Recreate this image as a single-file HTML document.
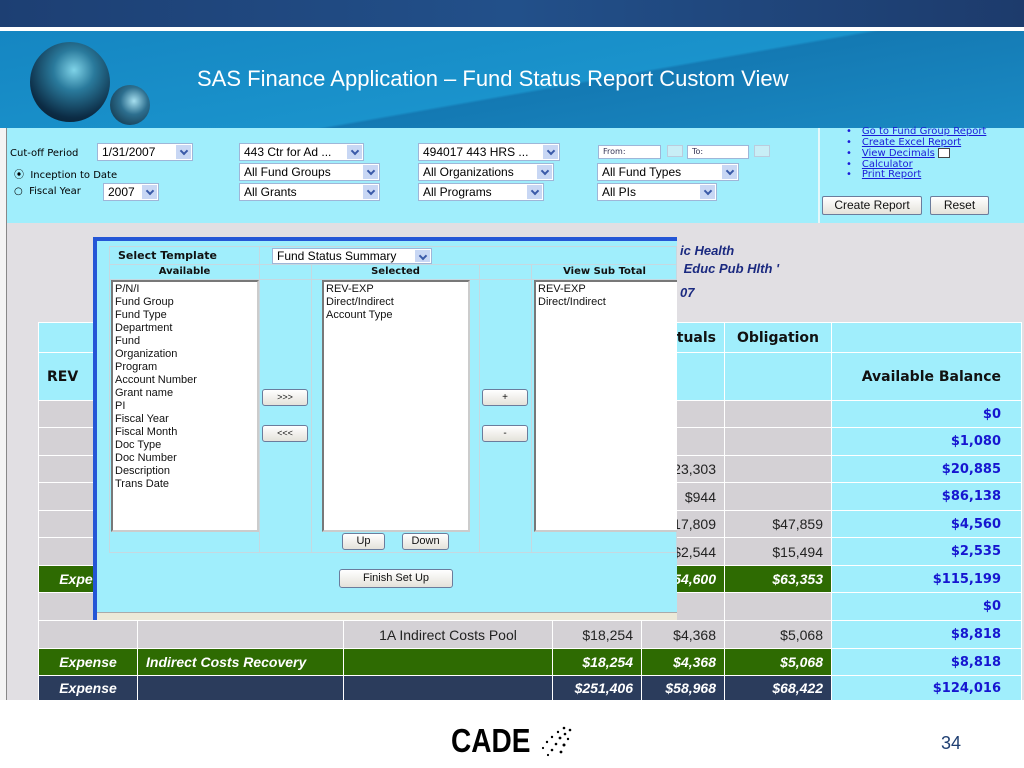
<!DOCTYPE html>
<html><head><meta charset="utf-8"><style>
*{margin:0;padding:0;box-sizing:border-box}
body{width:1024px;height:768px;position:relative;overflow:hidden;background:#fff;font-family:"Liberation Sans",sans-serif}
.a{position:absolute}
.sel{position:absolute;background:#fff;border:1px solid #9fb6d8;font-size:12px;padding:1px 4px;height:18px;line-height:15px;color:#000;white-space:nowrap;overflow:hidden}
.dd{position:absolute;right:1px;top:1px;width:15px;height:14px;background:#c8d7f4;font-size:0}
.dd:before{content:"";position:absolute;left:5px;top:3px;width:4px;height:4px;border-right:2px solid #3a5aa8;border-bottom:2px solid #3a5aa8;transform:rotate(45deg)}
.v{font-family:"DejaVu Sans",sans-serif;font-size:10px}
table.r{position:absolute;left:38px;top:322px;border-collapse:collapse;table-layout:fixed;width:983px;font-size:14px}
table.r td{border:1px solid #fff;background:#d4d1d5;padding:0 8px;text-align:right;color:#222;overflow:hidden;white-space:nowrap}
table.r td.c{background:#a0eefc;color:#1616d0;font-weight:bold;font-family:"DejaVu Sans",sans-serif;font-size:13px;padding-right:20px}
table.r tr.h td{background:#a0eefc;color:#111;font-weight:bold;font-family:"DejaVu Sans",sans-serif;font-size:14px}
table.r tr.g td{background:#2e6b02;color:#fff;font-style:italic;font-weight:bold}
table.r tr.n td{background:#2b3c5c;color:#fff;font-style:italic;font-weight:bold}
table.r tr.g td.c,table.r tr.n td.c{background:#a0eefc;color:#1616d0;font-style:normal}
td.m{text-align:center!important}
.lb{position:absolute;background:#fff;border:2px inset #ccc;font-size:11px;line-height:13px;padding:1px 2px;color:#111}
.bt{position:absolute;background:linear-gradient(#fff,#e4e2da);border:1px solid #6b7c9c;border-radius:3px;font-size:11px;text-align:center;color:#111}
.lk{color:#1a1ad8;font-family:"DejaVu Sans",sans-serif;font-size:10px;line-height:10.5px;white-space:nowrap}
.lk u{margin-left:10px}
</style></head><body>
<div class="a" style="left:0;top:0;width:1024px;height:27px;background:linear-gradient(90deg,#1d3f73,#22508a 50%,#1d3b6c)"></div>
<div class="a" style="left:0;top:31px;width:1024px;height:97px;background:linear-gradient(170deg,#1586c2 0%,#1a93cc 55%,#1479b3 56%,#1a8ac3 100%)"></div>
<div class="a" style="left:30px;top:42px;width:80px;height:80px;border-radius:50%;background:radial-gradient(circle at 55% 35%,#7fd3e8 0%,#2a7a9c 30%,#0c2c45 70%,#05151f 100%)"></div>
<div class="a" style="left:110px;top:85px;width:40px;height:40px;border-radius:50%;background:radial-gradient(circle at 60% 40%,#a6dfef 0%,#2d6f8f 40%,#0b2638 100%)"></div>
<div class="a" style="left:197px;top:66px;color:#fff;font-size:22px">SAS Finance Application – Fund Status Report Custom View</div>

<div class="a" style="left:0;top:128px;width:1024px;height:572px;background:#e1dfe3"></div>
<div class="a" style="left:0;top:128px;width:7px;height:572px;background:#f4f4f4;border-right:1px solid #888"></div>
<div class="a" style="left:7px;top:128px;width:1017px;height:95px;background:#a0eefc"></div>
<div class="a" style="left:818px;top:128px;width:2px;height:95px;background:#e6f8fb"></div>

<div class="a v" style="left:10px;top:148px">Cut-off Period</div>
<div class="sel" style="left:97px;top:143px;width:96px">1/31/2007<span class="dd"></span></div>
<div class="a v" style="left:14px;top:166px">⦿ &nbsp;Inception to Date</div>
<div class="a v" style="left:14px;top:186px">○ &nbsp;Fiscal Year</div>
<div class="sel" style="left:103px;top:183px;width:56px">2007<span class="dd"></span></div>
<div class="sel" style="left:239px;top:143px;width:125px">443 Ctr for Ad ...<span class="dd"></span></div>
<div class="sel" style="left:239px;top:163px;width:141px">All Fund Groups<span class="dd"></span></div>
<div class="sel" style="left:239px;top:183px;width:141px">All Grants<span class="dd"></span></div>
<div class="sel" style="left:418px;top:143px;width:142px">494017 443 HRS ...<span class="dd"></span></div>
<div class="sel" style="left:418px;top:163px;width:136px">All Organizations<span class="dd"></span></div>
<div class="sel" style="left:418px;top:183px;width:126px">All Programs<span class="dd"></span></div>
<div class="sel v" style="left:598px;top:145px;width:63px;height:14px;font-size:8px;line-height:10px;color:#335">From:</div>
<div class="a" style="left:667px;top:145px;width:16px;height:12px;background:#c8eef6;border:1px solid #bcd"></div>
<div class="sel v" style="left:687px;top:145px;width:62px;height:14px;font-size:8px;line-height:10px;color:#335">To:</div>
<div class="a" style="left:754px;top:145px;width:16px;height:12px;background:#c8eef6;border:1px solid #bcd"></div>
<div class="sel" style="left:597px;top:163px;width:142px">All Fund Types<span class="dd"></span></div>
<div class="sel" style="left:597px;top:183px;width:120px">All PIs<span class="dd"></span></div>
<div class="a" style="left:846px;top:127px">
<div class="lk">•<u>Go to Fund Group Report</u></div>
<div class="lk">•<u>Create Excel Report</u></div>
<div class="lk">•<u>View Decimals</u> <span style="display:inline-block;width:12px;height:10px;border:1px solid #444;background:#fff;vertical-align:middle"></span></div>
<div class="lk">•<u>Calculator</u></div>
<div class="lk">•<u>Print Report</u></div>
</div>
<div class="bt" style="left:822px;top:196px;width:100px;height:19px;font-size:12px;line-height:17px;border-radius:2px">Create Report</div>
<div class="bt" style="left:930px;top:196px;width:59px;height:19px;font-size:12px;line-height:17px;border-radius:2px">Reset</div>

<div class="a" style="left:680px;top:242px;color:#1b2a80;font-weight:bold;font-style:italic;font-size:13px;line-height:18px">ic Health<br>&nbsp;Educ Pub Hlth '<br><span style="line-height:30px">07</span></div>

<table class="r">
<colgroup><col style="width:99px"><col style="width:206px"><col style="width:209px"><col style="width:89px"><col style="width:83px"><col style="width:107px"><col style="width:190px"></colgroup>
<tr class="h" style="height:30px"><td></td><td></td><td></td><td></td><td>tuals</td><td style="text-align:center">Obligation</td><td></td></tr>
<tr class="h" style="height:48px"><td style="text-align:left">REV</td><td></td><td></td><td></td><td></td><td></td><td style="text-align:right;padding-right:20px">Available Balance</td></tr>
<tr style="height:27px"><td>Exp</td><td></td><td></td><td></td><td></td><td></td><td class="c">$0</td></tr>
<tr style="height:28px"><td></td><td></td><td></td><td></td><td></td><td></td><td class="c">$1,080</td></tr>
<tr style="height:27px"><td></td><td></td><td></td><td></td><td>$23,303</td><td></td><td class="c">$20,885</td></tr>
<tr style="height:28px"><td></td><td></td><td></td><td></td><td>$944</td><td></td><td class="c">$86,138</td></tr>
<tr style="height:27px"><td></td><td></td><td></td><td></td><td>$17,809</td><td>$47,859</td><td class="c">$4,560</td></tr>
<tr style="height:28px"><td></td><td></td><td></td><td></td><td>$2,544</td><td>$15,494</td><td class="c">$2,535</td></tr>
<tr class="g" style="height:27px"><td class="m">Expense</td><td></td><td></td><td></td><td>$54,600</td><td>$63,353</td><td class="c">$115,199</td></tr>
<tr style="height:28px"><td></td><td></td><td></td><td></td><td></td><td></td><td class="c">$0</td></tr>
<tr style="height:28px"><td></td><td></td><td style="text-align:center">1A Indirect Costs Pool</td><td>$18,254</td><td>$4,368</td><td>$5,068</td><td class="c">$8,818</td></tr>
<tr class="g" style="height:27px"><td class="m">Expense</td><td style="text-align:left">Indirect Costs Recovery</td><td></td><td>$18,254</td><td>$4,368</td><td>$5,068</td><td class="c">$8,818</td></tr>
<tr class="n" style="height:25px"><td class="m">Expense</td><td></td><td></td><td>$251,406</td><td>$58,968</td><td>$68,422</td><td class="c">$124,016</td></tr>
</table>

<!-- dialog -->
<div class="a" style="left:93px;top:237px;width:584px;height:383px;background:#a0eefc;border-left:4px solid #2456d6;border-top:4px solid #2456d6"></div>
<div class="a" style="left:97px;top:612px;width:580px;height:8px;background:#ece9d8;border-top:1px solid #aaa"></div>
<div class="a" style="left:109px;top:246px;width:568px;height:307px;border:1px solid #c6d8e0"></div>
<div class="a" style="left:109px;top:264px;width:568px;height:1px;background:#c6d8e0"></div>
<div class="a" style="left:109px;top:279px;width:568px;height:1px;background:#c6d8e0"></div>
<div class="a" style="left:259px;top:246px;width:1px;height:307px;background:#c6d8e0"></div>
<div class="a" style="left:311px;top:264px;width:1px;height:289px;background:#c6d8e0"></div>
<div class="a" style="left:479px;top:264px;width:1px;height:289px;background:#c6d8e0"></div>
<div class="a" style="left:531px;top:264px;width:1px;height:289px;background:#c6d8e0"></div>
<div class="a v" style="left:118px;top:249px;font-weight:bold;color:#111;font-size:11px">Select Template</div>
<div class="sel" style="left:272px;top:248px;width:160px;height:16px;line-height:13px;font-size:12px">Fund Status Summary<span class="dd" style="height:12px"></span></div>
<div class="a v" style="left:110px;top:266px;width:149px;text-align:center;font-weight:bold;color:#111">Available</div>
<div class="a v" style="left:312px;top:266px;width:167px;text-align:center;font-weight:bold;color:#111">Selected</div>
<div class="a v" style="left:532px;top:266px;width:145px;text-align:center;font-weight:bold;color:#111">View Sub Total</div>
<div class="lb" style="left:111px;top:280px;width:148px;height:252px">P/N/I<br>Fund Group<br>Fund Type<br>Department<br>Fund<br>Organization<br>Program<br>Account Number<br>Grant name<br>PI<br>Fiscal Year<br>Fiscal Month<br>Doc Type<br>Doc Number<br>Description<br>Trans Date</div>
<div class="lb" style="left:322px;top:280px;width:148px;height:252px">REV-EXP<br>Direct/Indirect<br>Account Type</div>
<div class="lb" style="left:534px;top:280px;width:143px;height:252px;border-right:none">REV-EXP<br>Direct/Indirect</div>
<div class="bt" style="left:262px;top:389px;width:46px;height:17px;line-height:15px;font-size:9px">&gt;&gt;&gt;</div>
<div class="bt" style="left:262px;top:425px;width:46px;height:17px;line-height:15px;font-size:9px">&lt;&lt;&lt;</div>
<div class="bt" style="left:482px;top:389px;width:46px;height:17px;line-height:15px;font-size:10px">+</div>
<div class="bt" style="left:482px;top:425px;width:46px;height:17px;line-height:15px;font-size:10px">-</div>
<div class="bt" style="left:342px;top:533px;width:43px;height:17px;line-height:15px">Up</div>
<div class="bt" style="left:402px;top:533px;width:47px;height:17px;line-height:15px">Down</div>
<div class="bt" style="left:339px;top:569px;width:114px;height:19px;line-height:17px">Finish Set Up</div>

<div class="a" style="left:451px;top:723px;font-family:'Liberation Sans Narrow','Liberation Sans',sans-serif;font-size:33px;line-height:36px;font-weight:bold;color:#000;transform:scaleX(0.85);transform-origin:left">CADE</div>
<svg class="a" style="left:534px;top:725px" width="40" height="32" viewBox="0 0 40 32">
<g fill="#000"><circle cx="30" cy="3" r="1.3"/><circle cx="36" cy="5" r="1.3"/><circle cx="24" cy="7" r="1.2"/><circle cx="31" cy="9" r="1.3"/><circle cx="18" cy="12" r="1.2"/><circle cx="26" cy="13" r="1.4"/><circle cx="34" cy="14" r="1.2"/><circle cx="13" cy="17" r="1.2"/><circle cx="22" cy="19" r="1.3"/><circle cx="30" cy="20" r="1.5"/><circle cx="9" cy="23" r="1.1"/><circle cx="18" cy="25" r="1.3"/><circle cx="27" cy="27" r="1.4"/><circle cx="14" cy="30" r="1.1"/></g></svg>
<div class="a" style="left:941px;top:733px;font-size:18px;color:#1f3f72">34</div>
</body></html>
